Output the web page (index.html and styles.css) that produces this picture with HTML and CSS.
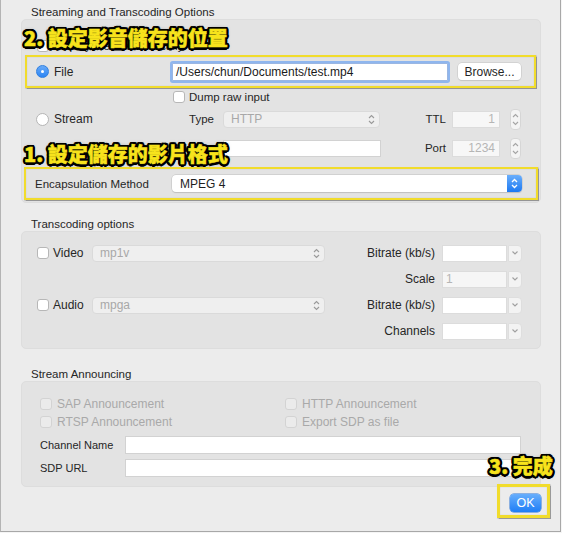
FILE: index.html
```html
<!DOCTYPE html>
<html>
<head>
<meta charset="utf-8">
<title>Streaming and Transcoding Options</title>
<link rel="stylesheet" href="styles.css">
</head>
<body>
<div class="window">
  <div class="sec-title">Streaming and Transcoding Options</div>
  <div class="group g1">
    <div class="row r-display">
      <span class="cb"></span><span class="cb-label">Display the stream locally</span>
    </div>
    <div class="hl hl-file">
      <div class="row r-file">
        <span class="radio on"></span>
        <span class="radio-label w-file">File</span>
        <div class="textfield focus">/Users/chun/Documents/test.mp4</div>
        <button class="btn">Browse...</button>
      </div>
    </div>
    <div class="row r-dump">
      <span class="cb"></span><span class="cb-label">Dump raw input</span>
    </div>
    <div class="row r-stream">
      <span class="radio"></span>
      <span class="radio-label w-stream">Stream</span>
      <span class="lbl-type">Type</span>
      <div class="popup disabled w-type"><span>HTTP</span>
        <svg class="updown" width="7" height="11" viewBox="0 0 7 11"><path d="M1 4 L3.5 1.5 L6 4 M1 7 L3.5 9.5 L6 7" fill="none" stroke="#9a9a9a" stroke-width="1.1"/></svg>
      </div>
      <span class="lbl-right w-ttl">TTL</span>
      <div class="numfield">1</div>
      <span class="stepper"><svg width="9" height="19" viewBox="0 0 9 19"><path d="M2 7 L4.5 4.5 L7 7 M2 12 L4.5 14.5 L7 12" fill="none" stroke="#a5a5a5" stroke-width="1.1"/></svg></span>
    </div>
    <div class="row r-addr">
      <span class="lbl-right w-addr">Address</span>
      <div class="textfield plain w-addrfield"></div>
      <span class="lbl-right w-port">Port</span>
      <div class="numfield">1234</div>
      <span class="stepper"><svg width="9" height="19" viewBox="0 0 9 19"><path d="M2 7 L4.5 4.5 L7 7 M2 12 L4.5 14.5 L7 12" fill="none" stroke="#a5a5a5" stroke-width="1.1"/></svg></span>
    </div>
    <div class="hl hl-encap">
      <div class="row r-encap">
        <span class="lbl-encap">Encapsulation Method</span>
        <div class="popup active"><span>MPEG 4</span>
          <span class="blue-btn"><svg width="9" height="13" viewBox="0 0 9 13"><path d="M2 5 L4.5 2.5 L7 5 M2 8 L4.5 10.5 L7 8" fill="none" stroke="#fff" stroke-width="1.3"/></svg></span>
        </div>
      </div>
    </div>
  </div>

  <div class="sec-title t2">Transcoding options</div>
  <div class="group g2">
    <div class="tgrid">
      <div class="tleft"><span class="cb"></span><span class="cb-label">Video</span></div>
      <div class="popup disabled w-codec"><span>mp1v</span>
        <svg class="updown" width="7" height="11" viewBox="0 0 7 11"><path d="M1 4 L3.5 1.5 L6 4 M1 7 L3.5 9.5 L6 7" fill="none" stroke="#9a9a9a" stroke-width="1.1"/></svg>
      </div>
      <div class="tlabel">Bitrate (kb/s)</div>
      <div class="combo"><span class="combo-field"></span><span class="combo-btn"><svg width="8" height="6" viewBox="0 0 8 6"><path d="M1.5 1.5 L4 4 L6.5 1.5" fill="none" stroke="#a0a0a0" stroke-width="1.1"/></svg></span></div>

      <div class="tlabel c3">Scale</div>
      <div class="combo"><span class="combo-field dim">1</span><span class="combo-btn"><svg width="8" height="6" viewBox="0 0 8 6"><path d="M1.5 1.5 L4 4 L6.5 1.5" fill="none" stroke="#a0a0a0" stroke-width="1.1"/></svg></span></div>

      <div class="tleft"><span class="cb"></span><span class="cb-label">Audio</span></div>
      <div class="popup disabled w-codec"><span>mpga</span>
        <svg class="updown" width="7" height="11" viewBox="0 0 7 11"><path d="M1 4 L3.5 1.5 L6 4 M1 7 L3.5 9.5 L6 7" fill="none" stroke="#9a9a9a" stroke-width="1.1"/></svg>
      </div>
      <div class="tlabel">Bitrate (kb/s)</div>
      <div class="combo"><span class="combo-field"></span><span class="combo-btn"><svg width="8" height="6" viewBox="0 0 8 6"><path d="M1.5 1.5 L4 4 L6.5 1.5" fill="none" stroke="#a0a0a0" stroke-width="1.1"/></svg></span></div>

      <div class="tlabel c3">Channels</div>
      <div class="combo"><span class="combo-field"></span><span class="combo-btn"><svg width="8" height="6" viewBox="0 0 8 6"><path d="M1.5 1.5 L4 4 L6.5 1.5" fill="none" stroke="#a0a0a0" stroke-width="1.1"/></svg></span></div>
    </div>
  </div>

  <div class="sec-title t3">Stream Announcing</div>
  <div class="group g3">
    <div class="arow">
      <div class="acol"><span class="cb dis"></span><span class="cb-label dis">SAP Announcement</span></div>
      <div class="acol"><span class="cb dis"></span><span class="cb-label dis">HTTP Announcement</span></div>
    </div>
    <div class="arow a2">
      <div class="acol"><span class="cb dis"></span><span class="cb-label dis">RTSP Announcement</span></div>
      <div class="acol"><span class="cb dis"></span><span class="cb-label dis">Export SDP as file</span></div>
    </div>
    <div class="frow f1"><span class="flabel">Channel Name</span><div class="textfield plain wide"></div></div>
    <div class="frow f2"><span class="flabel">SDP URL</span><div class="textfield plain wide"></div></div>
  </div>

  <div class="footer">
    <div class="hl hl-ok"><button class="ok">OK</button></div>
  </div>

  <div class="note n2">2. 設定影音儲存的位置</div>
  <div class="note n1">1. 設定儲存的影片格式</div>
  <div class="note n3">3. 完成</div>
</div>
</body>
</html>
```

FILE: styles.css
```css
* { box-sizing: border-box; }
html, body { margin: 0; padding: 0; }
body {
  width: 562px;
  height: 533px;
  overflow: hidden;
  background: #f5f5f5;
  font-family: "Liberation Sans", Arial, sans-serif;
  font-size: 11.5px;
  color: #262626;
}
.window {
  position: relative;
  width: 561px;
  height: 532px;
  background: #ececec;
  border-left: 1px solid #b4b4b4;
  border-right: 1px solid #a8a8a8;
  border-bottom: 1px solid #a8a8a8;
  padding: 5px 0 0 20px;
}
.sec-title {
  height: 14px;
  line-height: 14px;
  padding-left: 10px;
  color: #262626;
}
.t2 { margin-top: 14px; }
.t3 { margin-top: 18px; }

.group {
  width: 520px;
  background: #e3e3e3;
  border: 1px solid #dddddd;
  border-radius: 5px;
}
.row { display: flex; align-items: center; }

/* group 1 */
.g1 { height: 184px; padding-top: 20px; }
.r-display { height: 15px; padding-left: 15px; align-items: flex-start; }
.hl {
  border: 2px solid #f1dc2c;
  box-shadow: 0 0 1px 0.5px rgba(0,0,0,0.35), inset 0 0 1px rgba(0,0,0,0.25);
}
.hl-file { margin-left: 3px; width: 511px; height: 33px; }
.r-file { height: 29px; padding-left: 9px; }
.r-dump { height: 17px; padding-left: 151px; }
.r-stream { height: 20px; margin-top: 4px; padding-left: 14px; }
.r-addr { height: 20px; margin-top: 9px; }
.hl-encap { margin-left: 2px; margin-top: 9px; width: 514px; height: 33px; }
.r-encap { height: 29px; padding-left: 9px; }

.cb {
  display: inline-block;
  width: 12px;
  height: 12px;
  flex: none;
  background: #fff;
  border: 1px solid #b7b7b7;
  border-radius: 3px;
}
.cb.dis { background: #ebebeb; border-color: #d3d3d3; }
.cb-label { margin-left: 4px; }
.cb-label.dis { color: #a9a9a9; }

.radio {
  width: 13px;
  height: 13px;
  flex: none;
  border-radius: 50%;
  background: #fff;
  border: 1px solid #b5b5b5;
  position: relative;
}
.radio.on {
  background: linear-gradient(#68aaf8, #2c85f4);
  border-color: #2f7fe0;
}
.radio.on::after {
  content: "";
  position: absolute;
  left: 4px;
  top: 4px;
  width: 3px;
  height: 3px;
  border-radius: 50%;
  background: #fff;
}
.radio-label { margin-left: 5px; }
.w-file { width: 116px; font-size: 12px; }
.w-stream { width: 119px; font-size: 12px; }
.lbl-type { width: 50px; padding-left: 16px; }
.lbl-right { text-align: right; padding-right: 6px; flex: none; }
.w-ttl { width: 72px; }
.w-port { width: 71px; }
.w-addr { width: 201px; padding-right: 8px; }

.textfield {
  height: 18px;
  background: #fff;
  border: 1px solid #d2d2d2;
  flex: none;
}
.textfield.focus {
  margin-left: 2px;
  width: 276px;
  border-color: #9ab6e2;
  box-shadow: 0 0 0 2px #8fb6ee;
  border-radius: 1px;
  line-height: 16px;
  padding-left: 3px;
  font-size: 12px;
  color: #1a1a1a;
}
.w-addrfield { width: 158px; height: 17px; }
.btn {
  margin-left: 10px;
  width: 63px;
  height: 17px;
  padding: 0;
  background: #fff;
  border: none;
  border-radius: 4px;
  box-shadow: 0 0 0 0.5px #c4c4c4, 0 1px 1px rgba(0,0,0,0.12);
  font-family: inherit;
  font-size: 12px;
  color: #262626;
}

.popup {
  position: relative;
  display: flex;
  align-items: center;
  height: 17px;
  border-radius: 4px;
  flex: none;
}
.popup.disabled {
  background: #efefef;
  border: 1px solid #dadada;
  color: #a8a8a8;
  padding-left: 7px;
  font-size: 12px;
}
.popup .updown { position: absolute; right: 4px; top: 2px; }
.w-type { width: 157px; }
.w-codec { width: 233px; }
.popup.active {
  width: 350px;
  background: #fff;
  box-shadow: 0 0 0 0.5px #c0c0c0, 0 1px 1px rgba(0,0,0,0.15);
  padding-left: 8px;
  font-size: 12px;
  color: #1e1e1e;
}
.blue-btn {
  position: absolute;
  right: 0;
  top: 0;
  width: 15px;
  height: 17px;
  border-radius: 0 4px 4px 0;
  background: linear-gradient(#6aaefb, #1c79f2);
  display: flex;
  align-items: center;
  justify-content: center;
}
.lbl-encap { width: 137px; }

.numfield {
  width: 48px;
  height: 17px;
  flex: none;
  background: #f7f7f7;
  border: 1px solid #dcdcdc;
  text-align: right;
  padding-right: 4px;
  line-height: 15px;
  color: #b5b5b5;
  font-size: 12px;
}
.stepper {
  margin-left: 10px;
  width: 11px;
  height: 21px;
  flex: none;
  background: #f4f4f4;
  border: 1px solid #d6d6d6;
  border-radius: 4px;
  display: flex;
  align-items: center;
  justify-content: center;
}

/* group 2 */
.g2 { height: 118px; padding-top: 8px; }
.tgrid {
  display: grid;
  grid-template-columns: 70px 233px 110px 87px;
  grid-auto-rows: 26px;
  align-items: center;
}
.tleft { display: flex; align-items: center; padding-left: 15px; }
.tleft .cb { width: 12px; }
.tleft .cb-label { margin-left: 4px; font-size: 12px; }
.tlabel { text-align: right; font-size: 12px; }
.c3 { grid-column: 3; }
.combo { display: flex; margin-left: 7px; width: 80px; height: 17px; }
.combo-field {
  width: 65px;
  height: 17px;
  background: #fff;
  border: 1px solid #dcdcdc;
  padding-left: 3px;
  line-height: 15px;
  font-size: 12px;
}
.combo-field.dim { background: #f6f6f6; color: #b5b5b5; }
.combo-btn {
  margin-left: 1px;
  width: 14px;
  height: 17px;
  background: #f3f3f3;
  border: 1px solid #dedede;
  border-radius: 0 4px 4px 0;
  display: flex;
  align-items: center;
  justify-content: center;
}

/* group 3 */
.g3 { height: 106px; padding-top: 14px; }
.arow { display: flex; height: 16px; align-items: center; padding-left: 18px; }
.a2 { margin-top: 2px; }
.acol { display: flex; align-items: center; }
.acol:first-child { width: 245px; }
.acol .cb-label { margin-left: 5px; font-size: 12px; }
.frow { display: flex; align-items: center; height: 18px; padding-left: 18px; }
.f1 { margin-top: 6px; }
.f2 { margin-top: 5px; }
.flabel { width: 85px; font-size: 11px; }
.textfield.wide { width: 396px; height: 18px; }

/* footer */
.footer {
  display: flex;
  justify-content: flex-end;
  margin-top: -3px;
  padding-right: 10px;
  margin-left: -20px;
}
.hl-ok {
  border-width: 3px;
  padding: 7px 6px 3px 10px;
}
.ok {
  display: block;
  width: 31px;
  height: 18px;
  padding: 0;
  border: none;
  border-radius: 4px;
  background: linear-gradient(#67aefc, #1f7ef6);
  box-shadow: 0 0 0 0.5px #2b74d6;
  color: #fff;
  font-family: inherit;
  font-size: 12.5px;
}

/* annotations */
.note {
  position: absolute;
  font-family: "Noto Sans CJK TC", "Noto Sans CJK SC", sans-serif;
  font-weight: 900;
  font-size: 20px;
  line-height: 24px;
  color: #f7e31c;
  -webkit-text-stroke: 0.5px #f7e31c;
  white-space: nowrap;
  text-shadow:
    2.5px 0 0 #000, -2.5px 0 0 #000, 0 2.5px 0 #000, 0 -2.5px 0 #000,
    1.8px 1.8px 0 #000, -1.8px 1.8px 0 #000, 1.8px -1.8px 0 #000, -1.8px -1.8px 0 #000,
    1px 2.3px 0 #000, -1px 2.3px 0 #000, 2.3px 1px 0 #000, -2.3px 1px 0 #000,
    1px -2.3px 0 #000, -1px -2.3px 0 #000, 2.3px -1px 0 #000, -2.3px -1px 0 #000,
    0 0 4px rgba(0,0,0,0.6);
}
.n2 { left: 23px; top: 26px; }
.n1 { left: 23px; top: 142px; }
.n3 { left: 488px; top: 454px; }
```
